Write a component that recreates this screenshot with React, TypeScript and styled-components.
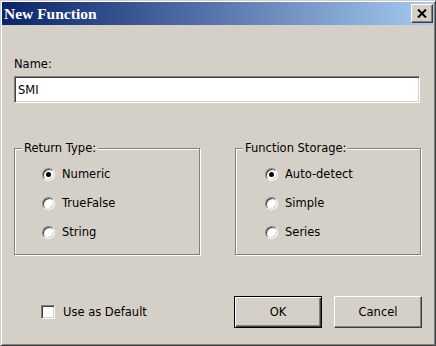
import * as React from "react";
import styled, { createGlobalStyle } from "styled-components";

const GlobalStyle = createGlobalStyle`
  html, body {
    margin: 0;
    padding: 0;
    background: #d4d0c8;
  }
  body {
    font-family: "DejaVu Sans", Tahoma, sans-serif;
    font-size: 11.5px;
    color: #000;
  }
`;

const Window = styled.div`
  box-sizing: border-box;
  width: 436px;
  height: 346px;
  padding: 1px;
  display: flex;
  flex-direction: column;
  background: #d4d0c8;
  border: 1px solid;
  border-color: #d4d0c8 #404040 #404040 #d4d0c8;
  box-shadow: inset 1px 1px 0 #ffffff, inset -1px -1px 0 #808080;
`;

const TitleBar = styled.div`
  height: 23px;
  display: flex;
  align-items: center;
  justify-content: space-between;
  padding: 0 1px 0 2px;
  background: linear-gradient(to right, #0a246a 0%, #a6caf0 100%);
`;

const Title = styled.span`
  font-family: "Liberation Serif", "Times New Roman", serif;
  font-weight: bold;
  font-size: 15.5px;
  color: #ffffff;
`;

const CloseButton = styled.button`
  box-sizing: border-box;
  width: 22px;
  height: 19px;
  padding: 0;
  display: flex;
  align-items: center;
  justify-content: center;
  background: #d4d0c8;
  border: 1px solid;
  border-color: #ffffff #404040 #404040 #ffffff;
  box-shadow: inset -1px -1px 0 #808080;
`;

const Body = styled.div`
  flex: 1;
  display: flex;
  flex-direction: column;
  padding: 0 12px;
`;

const FieldLabel = styled.div`
  margin-top: 32px;
  line-height: 14px;
`;

const TextInput = styled.input`
  box-sizing: border-box;
  margin-top: 5px;
  width: 406px;
  height: 27px;
  padding: 0 3px;
  font-family: inherit;
  font-size: 11.5px;
  background: #ffffff;
  border: 1px solid;
  border-color: #808080 #ffffff #ffffff #808080;
  box-shadow: inset 1px 1px 0 #404040, inset -1px -1px 0 #d4d0c8;
  outline: none;
`;

const GroupRow = styled.div`
  margin-top: 45px;
  display: flex;
  justify-content: space-between;
  padding-right: 1px;
`;

const Group = styled.div<{ $indent: number }>`
  position: relative;
  box-sizing: border-box;
  width: 186px;
  height: 107px;
  border: 1px solid #808080;
  box-shadow: 1px 1px 0 #ffffff, inset 1px 1px 0 #ffffff;
  display: flex;
  flex-direction: column;
  gap: 13px;
  padding: 17px 0 0 ${(p) => p.$indent}px;
`;

const Legend = styled.span`
  position: absolute;
  top: -8px;
  left: 7px;
  padding: 0 2px;
  line-height: 14px;
  background: #d4d0c8;
`;

const RadioRow = styled.label`
  display: flex;
  align-items: center;
  gap: 7px;
  height: 16px;
`;

const RadioCircle = styled.span<{ $checked: boolean }>`
  box-sizing: border-box;
  width: 13px;
  height: 13px;
  border-radius: 50%;
  display: flex;
  align-items: center;
  justify-content: center;
  background: #ffffff;
  border: 1px solid;
  border-color: #808080 #ffffff #ffffff #808080;
  box-shadow: inset 1px 1px 0 #404040, inset -1px -1px 0 #d4d0c8;

  &::after {
    content: "";
    width: 5px;
    height: 5px;
    border-radius: 50%;
    background: ${(p) => (p.$checked ? "#000000" : "transparent")};
  }
`;

const BottomRow = styled.div`
  margin-top: 41px;
  display: flex;
  align-items: center;
  padding-left: 27px;
`;

const CheckLabel = styled.label`
  display: flex;
  align-items: center;
  gap: 8px;
  flex: 1;
`;

const CheckBox = styled.span`
  box-sizing: border-box;
  width: 14px;
  height: 14px;
  background: #ffffff;
  border: 1px solid;
  border-color: #808080 #ffffff #ffffff #808080;
  box-shadow: inset 1px 1px 0 #404040, inset -1px -1px 0 #d4d0c8;
`;

const Button = styled.button<{ $default?: boolean }>`
  box-sizing: border-box;
  width: 88px;
  height: 32px;
  margin-left: 12px;
  font-family: inherit;
  font-size: 11.5px;
  color: #000;
  background: #d4d0c8;
  border: 1px solid;
  border-color: ${(p) =>
    p.$default ? "#000000" : "#ffffff #404040 #404040 #ffffff"};
  box-shadow: ${(p) =>
    p.$default
      ? "inset 1px 1px 0 #ffffff, inset -1px -1px 0 #404040, inset -2px -2px 0 #808080"
      : "inset -1px -1px 0 #808080"};
`;

const returnTypes = ["Numeric", "TrueFalse", "String"];
const storages = ["Auto-detect", "Simple", "Series"];

const RadioGroup = ({
  title,
  options,
  selected,
  indent,
}: {
  title: string;
  options: string[];
  selected: number;
  indent: number;
}) => (
  <Group $indent={indent}>
    <Legend>{title}</Legend>
    {options.map((o, i) => (
      <RadioRow key={o}>
        <RadioCircle $checked={i === selected} />
        {o}
      </RadioRow>
    ))}
  </Group>
);

export default function App() {
  return (
    <>
      <GlobalStyle />
      <Window>
        <TitleBar>
          <Title>New Function</Title>
          <CloseButton>
            <svg width="10" height="9" viewBox="0 0 10 9">
              <path d="M1 0.5 L9 8.5 M9 0.5 L1 8.5" stroke="#000" strokeWidth="2" />
            </svg>
          </CloseButton>
        </TitleBar>
        <Body>
          <FieldLabel>Name:</FieldLabel>
          <TextInput defaultValue="SMI" />
          <GroupRow>
            <RadioGroup title="Return Type:" options={returnTypes} selected={0} indent={27} />
            <RadioGroup title="Function Storage:" options={storages} selected={0} indent={29} />
          </GroupRow>
          <BottomRow>
            <CheckLabel>
              <CheckBox />
              Use as Default
            </CheckLabel>
            <Button $default>OK</Button>
            <Button>Cancel</Button>
          </BottomRow>
        </Body>
      </Window>
    </>
  );
}
